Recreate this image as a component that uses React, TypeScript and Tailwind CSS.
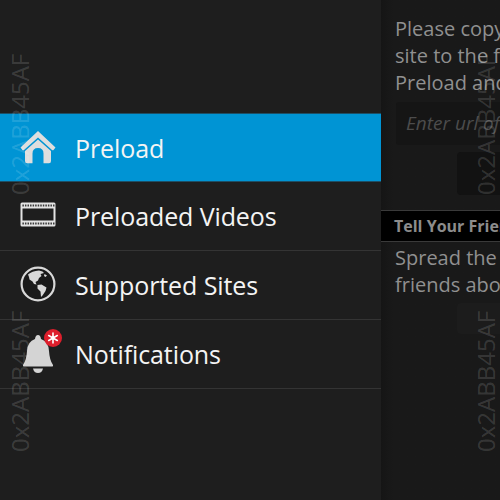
const font = { fontFamily: '"Open Sans", "Noto Sans", sans-serif' };

function HomeIcon() {
  return (
    <svg width="36" height="36" viewBox="0 0 36 36" fill="#dedede" className="-mt-[2px]">
      <path d="M18 2 L35.5 18.5 L33.5 21 Q33 21.6 32 21 L18 8.5 L4 21 Q3 21.6 2.4 21 L0.5 18.5 Z" />
      <path fillRule="evenodd" d="M18 10.5 L31 22 V32 Q31 34.3 29 34.3 H23.5 V24.5 Q23.5 19 18 19 Q12.5 19 12.5 24.5 V34.3 H7 Q5 34.3 5 32 V22 Z" />
    </svg>
  );
}

function FilmIcon() {
  const holes = Array.from({ length: 13 }, (_, i) => 4 + i * 2.55);
  return (
    <svg width="36" height="25" viewBox="0 0 36 25" className="-mt-[3px]">
      <rect x="0.5" y="0.5" width="35" height="24" rx="1.5" fill="#e4e4e4" />
      <rect x="2.5" y="6.5" width="31" height="12" fill="#1e1e1e" />
      {holes.map((x) => (
        <g key={x} fill="#3a3a3a">
          <rect x={x - 1.6} y="2.5" width="1.5" height="2" />
          <rect x={x - 1.6} y="20.5" width="1.5" height="2" />
        </g>
      ))}
    </svg>
  );
}

function GlobeIcon() {
  return (
    <svg width="36" height="36" viewBox="0 0 36 36" className="-mt-[2px]">
      <circle cx="18" cy="18" r="16.4" fill="#1a1a1a" stroke="#d8d8d8" strokeWidth="2.2" />
      <path fill="#d8d8d8" d="M8 8.5 Q12 5 19 4.5 L22.5 5.5 L24 7 L20.5 8 L21.5 10 L19 12 L18 14.5 L15.5 16 L16.5 18.5 L14 18 L12.5 15.5 L9.5 13.5 L9 11 Z" />
      <path fill="#d8d8d8" d="M17.5 19 L21.5 18.5 L26.5 21.5 L25.5 25 L22.5 29.5 L21 31 L20.5 25.5 L17.5 22.5 Z" />
      <path fill="#d8d8d8" d="M24.5 8 L27 9.5 L25.5 11 L24 10 Z" />
    </svg>
  );
}

function BellIcon() {
  return (
    <div className="relative ml-[2px] h-[40px] w-[34px]">
      <svg width="32" height="40" viewBox="0 0 32 40" className="absolute left-0 top-0" fill="#d4d4d4">
        <path d="M16 1 Q18.5 1 19 5 Q26.5 7.5 27 17 Q27.5 26 31 31 Q31.5 32.5 30 32.5 H2 Q0.5 32.5 1 31 Q4.5 26 5 17 Q5.5 7.5 13 5 Q13.5 1 16 1 Z" />
        <path d="M11 34.5 H21 Q20 39 16 39 Q12 39 11 34.5 Z" />
      </svg>
      <div className="absolute left-[22px] top-[-5px] flex h-[18px] w-[18px] items-center justify-center rounded-full bg-[#dd1f2c]">
        <svg width="12" height="12" viewBox="0 0 12 12" stroke="#ffffff" strokeWidth="1.6" strokeLinecap="round">
          <path d="M6 1 V11 M1.7 3.5 L10.3 8.5 M10.3 3.5 L1.7 8.5" />
        </svg>
      </div>
    </div>
  );
}

function Row({ icon, label, active }: { icon: React.ReactNode; label: string; active?: boolean }) {
  return (
    <div
      className={
        active
          ? "flex h-[69px] items-center border-y border-[#1d4f66] bg-[#0094d4] pl-[20px]"
          : "flex h-[69px] items-center border-b border-[#343434] pl-[20px]"
      }
    >
      <div className="flex w-[55px] shrink-0 items-center">{icon}</div>
      <span className="pt-[1px] text-[25px] leading-none tracking-[-0.1px] text-[#f4f4f4]">{label}</span>
    </div>
  );
}

function Mark({ className }: { className: string }) {
  return (
    <span
      className={
        "pointer-events-none absolute origin-top-left -rotate-90 whitespace-nowrap text-[24px] leading-none text-[#ffffff26] " +
        className
      }
    >
      0x2ABB45AF
    </span>
  );
}

export default function App() {
  return (
    <div className="relative flex h-[500px] w-[500px] overflow-hidden bg-[#1e1e1e]" style={font}>
      <div className="w-[381px] shrink-0 pt-[113px]">
        <Row active icon={<HomeIcon />} label="Preload" />
        <Row icon={<FilmIcon />} label="Preloaded Videos" />
        <Row icon={<GlobeIcon />} label="Supported Sites" />
        <Row icon={<BellIcon />} label="Notifications" />
      </div>
      <div className="relative min-w-0 flex-1 overflow-hidden bg-gradient-to-r from-[#151515] to-[#191919] to-[12px] pt-[15px]">
        <div className="w-[300px] pl-[14px] text-[20px] leading-[27px] text-[#909090]">
          <p>Please copy</p>
          <p>site to the f</p>
          <p>Preload and</p>
        </div>
        <div className="ml-[15px] mt-[6px] flex h-[43px] w-[300px] items-center rounded-[3px] bg-[#151515] pl-[10px] text-[19px] italic text-[#4c4c4c]">
          Enter url of
        </div>
        <div className="ml-[76px] mt-[7px] h-[43px] w-[200px] rounded-[4px] bg-[#121212]" />
        <div className="mt-[15px] flex h-[32px] w-[300px] items-center border-y border-[#3a3a3a] bg-black pl-[13px] text-[16px] font-bold text-[#8c8c8c]">
          Tell Your Friends
        </div>
        <div className="mt-[2px] w-[300px] pl-[14px] text-[20px] leading-[27px] text-[#909090]">
          <p>Spread the</p>
          <p>friends abo</p>
        </div>
        <div className="ml-[76px] mt-[5px] h-[31px] w-[200px] rounded-[4px] bg-[#1c1c1c]" />
      </div>
      <Mark className="left-[8px] top-[195px]" />
      <Mark className="left-[8px] top-[452px]" />
      <Mark className="left-[474px] top-[195px]" />
      <Mark className="left-[474px] top-[452px]" />
    </div>
  );
}
